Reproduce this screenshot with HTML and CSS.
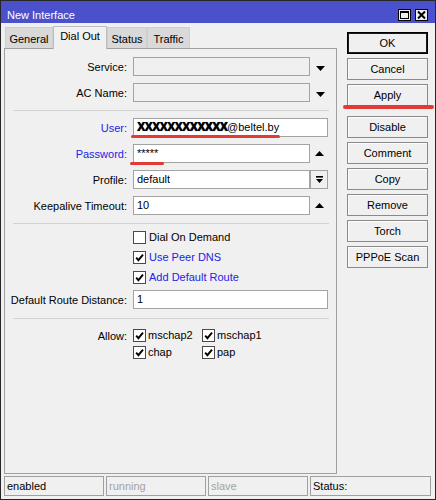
FILE: index.html
```html
<!DOCTYPE html>
<html>
<head>
<meta charset="utf-8">
<link rel="stylesheet" href="styles.css">
</head>
<body>
<div class="window">
  <div class="titlebar">
    <span class="title">New Interface</span>
    <div class="tb-buttons">
      <span class="tb-btn"><svg width="11" height="10" viewBox="0 0 11 10"><rect x="1.5" y="1.5" width="8" height="7" fill="none" stroke="#000"/><rect x="1" y="1" width="9" height="2" fill="#000"/></svg></span>
      <span class="tb-btn"><svg width="11" height="10" viewBox="0 0 11 10"><path d="M2 1.5 L9 8.5 M9 1.5 L2 8.5" stroke="#000" stroke-width="2" fill="none"/></svg></span>
    </div>
  </div>

  <div class="body">
    <div class="left">
      <div class="tabs">
        <div class="tab tab-general">General</div>
        <div class="tab tab-dialout active">Dial Out</div>
        <div class="tab tab-status">Status</div>
        <div class="tab tab-traffic">Traffic</div>
      </div>
      <div class="panel">
        <div class="row">
          <span class="lbl">Service:</span>
          <div class="ctl"><div class="input disabled"></div><span class="side down"><svg width="9" height="5" viewBox="0 0 9 5"><polygon points="0,0 9,0 4.5,5" fill="#000"/></svg></span></div>
        </div>
        <div class="row gap7">
          <span class="lbl">AC Name:</span>
          <div class="ctl"><div class="input disabled"></div><span class="side down"><svg width="9" height="5" viewBox="0 0 9 5"><polygon points="0,0 9,0 4.5,5" fill="#000"/></svg></span></div>
        </div>

        <div class="sep sep-a"></div>

        <div class="row gap7">
          <span class="lbl blue">User:</span>
          <div class="ctl"><div class="input"><span class="mask">XXXXXXXXXXXX</span>@beltel.by</div></div>
        </div>
        <div class="row gap7">
          <span class="lbl blue">Password:</span>
          <div class="ctl"><div class="input">*****</div><span class="side up"><svg width="9" height="5" viewBox="0 0 9 5"><polygon points="0,5 9,5 4.5,0" fill="#000"/></svg></span></div>
        </div>
        <div class="row gap7">
          <span class="lbl">Profile:</span>
          <div class="ctl"><div class="input">default</div><span class="side btnbox"><svg width="9" height="8" viewBox="0 0 9 8"><rect x="1" y="0" width="7" height="1.6" fill="#000"/><polygon points="1,3 8,3 4.5,7" fill="#000"/></svg></span></div>
        </div>
        <div class="row gap7">
          <span class="lbl">Keepalive Timeout:</span>
          <div class="ctl"><div class="input">10</div><span class="side up"><svg width="9" height="5" viewBox="0 0 9 5"><polygon points="0,5 9,5 4.5,0" fill="#000"/></svg></span></div>
        </div>

        <div class="sep sep-a"></div>

        <div class="check-row">
          <span></span>
          <span class="check"><span class="cb"></span><span class="cb-text">Dial On Demand</span></span>
        </div>
        <div class="check-row">
          <span></span>
          <span class="check"><span class="cb"><svg width="11" height="11" viewBox="0 0 11 11"><path d="M2.2 5.6 L4.4 8.2 L9 2.6" stroke="#000" stroke-width="1.9" fill="none"/></svg></span><span class="cb-text blue">Use Peer DNS</span></span>
        </div>
        <div class="check-row">
          <span></span>
          <span class="check"><span class="cb"><svg width="11" height="11" viewBox="0 0 11 11"><path d="M2.2 5.6 L4.4 8.2 L9 2.6" stroke="#000" stroke-width="1.9" fill="none"/></svg></span><span class="cb-text blue">Add Default Route</span></span>
        </div>

        <div class="row drd">
          <span class="lbl">Default Route Distance:</span>
          <div class="ctl"><div class="input">1</div></div>
        </div>

        <div class="sep sep-b"></div>

        <div class="allow-row first">
          <span class="lbl">Allow:</span>
          <span class="check tight"><span class="cb"><svg width="11" height="11" viewBox="0 0 11 11"><path d="M2.2 5.6 L4.4 8.2 L9 2.6" stroke="#000" stroke-width="1.9" fill="none"/></svg></span><span class="cb-text">mschap2</span></span>
          <span class="check tight"><span class="cb"><svg width="11" height="11" viewBox="0 0 11 11"><path d="M2.2 5.6 L4.4 8.2 L9 2.6" stroke="#000" stroke-width="1.9" fill="none"/></svg></span><span class="cb-text">mschap1</span></span>
        </div>
        <div class="allow-row">
          <span></span>
          <span class="check tight"><span class="cb"><svg width="11" height="11" viewBox="0 0 11 11"><path d="M2.2 5.6 L4.4 8.2 L9 2.6" stroke="#000" stroke-width="1.9" fill="none"/></svg></span><span class="cb-text">chap</span></span>
          <span class="check tight"><span class="cb"><svg width="11" height="11" viewBox="0 0 11 11"><path d="M2.2 5.6 L4.4 8.2 L9 2.6" stroke="#000" stroke-width="1.9" fill="none"/></svg></span><span class="cb-text">pap</span></span>
        </div>
      </div>
    </div>

    <div class="actions">
      <div class="btn default">OK</div>
      <div class="btn">Cancel</div>
      <div class="btn group-end">Apply</div>
      <div class="btn">Disable</div>
      <div class="btn">Comment</div>
      <div class="btn">Copy</div>
      <div class="btn">Remove</div>
      <div class="btn">Torch</div>
      <div class="btn">PPPoE Scan</div>
    </div>
  </div>

  <div class="statusbar">
    <div class="cell">enabled</div>
    <div class="cell muted">running</div>
    <div class="cell muted">slave</div>
    <div class="cell wide">Status:</div>
  </div>

  <span class="mark mark-user"></span>
  <span class="mark mark-pass"></span>
  <span class="mark mark-apply"></span>
</div>
</body>
</html>
```

FILE: styles.css
```css
html, body {
  margin: 0;
  padding: 0;
  background: #f0f0f0;
}

body {
  font-family: "Liberation Sans", Arial, sans-serif;
  font-size: 11px;
  color: #000;
}

.window {
  position: relative;
  width: 436px;
  height: 500px;
  box-sizing: border-box;
  border: 1px solid #262626;
  background: #f0f0f0;
  display: flex;
  flex-direction: column;
}

/* title bar */
.titlebar {
  height: 22px;
  flex-shrink: 0;
  background: #4b50cb;
  color: #fff;
  display: flex;
  align-items: flex-start;
}

.title {
  padding: 8px 0 0 6px;
  line-height: 13px;
}

.tb-buttons {
  margin-left: auto;
  display: flex;
  gap: 4px;
  padding: 8px 7px 0 0;
}

.tb-btn {
  width: 13px;
  height: 12px;
  box-sizing: border-box;
  border: 1px solid #000;
  background: #f0f0f0;
  display: flex;
  align-items: center;
  justify-content: center;
}

.tb-btn svg {
  display: block;
}

/* body */
.body {
  flex: 1;
  min-height: 0;
  display: flex;
  padding: 3px 0 0 3px;
}

.left {
  width: 333px;
  display: flex;
  flex-direction: column;
}

.tabs {
  display: flex;
  height: 22px;
  padding-left: 1px;
  align-items: flex-end;
  position: relative;
  z-index: 1;
}

.tab {
  box-sizing: border-box;
  height: 21px;
  border: 1px solid #cfcfcf;
  border-bottom: none;
  background: #d9d9d9;
  text-align: center;
  line-height: 13px;
  padding-top: 5px;
}

.tab.active {
  height: 23px;
  margin-bottom: -1px;
  background: #f0f0f0;
  border-color: #bdbdbd;
  padding-top: 3px;
}

.tab-general { width: 48px; }
.tab-dialout { width: 54px; }
.tab-status { width: 40px; }
.tab-traffic { width: 43px; }

.panel {
  flex: 1;
  border: 1px solid #a0a0a0;
  background: #f0f0f0;
  padding-top: 8px;
}

/* form rows */
.row {
  display: grid;
  grid-template-columns: 122px 195px;
  column-gap: 6px;
  height: 19px;
  align-items: center;
}

.gap7 { margin-top: 7px; }
.drd { margin-top: 6px; }

.lbl {
  text-align: right;
  white-space: nowrap;
}

.blue { color: #2323e6; }

.ctl {
  display: flex;
  height: 19px;
}

.input {
  flex: 1;
  height: 19px;
  box-sizing: border-box;
  border: 1px solid #a3a3a3;
  background: #fff;
  padding-left: 3px;
  line-height: 17px;
  white-space: nowrap;
  overflow: hidden;
}

.input.disabled {
  background: #f0f0f0;
}

.mask {
  font-weight: bold;
  font-size: 12px;
  letter-spacing: -0.5px;
  text-shadow: 0.6px 0 0 #000, 0 0 1px rgba(0, 0, 0, 0.6);
}

.side {
  width: 18px;
  height: 19px;
  box-sizing: border-box;
  display: flex;
  align-items: center;
}

.side svg { display: block; }

.side.down { padding-left: 6px; padding-top: 3px; }
.side.up { padding-left: 5px; }

.side.btnbox {
  border: 1px solid #a3a3a3;
  background: #f0f0f0;
  justify-content: center;
}

.sep {
  height: 0;
  border-top: 1px solid #d3d3d3;
  margin-left: 8px;
  margin-right: 7px;
}

.sep-a { margin-top: 8px; }
.sep-b { margin-top: 9px; }

/* checkboxes */
.check-row {
  display: grid;
  grid-template-columns: 122px auto;
  column-gap: 6px;
  height: 13px;
  margin-top: 7px;
  align-items: center;
}

.check {
  display: flex;
  align-items: center;
  white-space: nowrap;
}

.cb {
  width: 13px;
  height: 13px;
  box-sizing: border-box;
  border: 1px solid #4a4a4a;
  background: #fff;
  flex-shrink: 0;
}

.cb svg { display: block; }

.cb-text {
  margin-left: 3px;
  line-height: 13px;
}

.check.tight .cb-text { margin-left: 2px; }

.allow-row {
  display: grid;
  grid-template-columns: 128px 69px auto;
  height: 13px;
  margin-top: 4px;
  align-items: center;
}

.allow-row .lbl {
  padding-right: 6px;
}

.allow-row.first { margin-top: 10px; }

/* action buttons */
.actions {
  display: flex;
  flex-direction: column;
  gap: 4px;
  width: 81px;
  margin-left: 10px;
  padding-top: 6px;
}

.btn {
  height: 22px;
  box-sizing: border-box;
  border: 1px solid #8a8a8a;
  background: #f0f0f0;
  box-shadow: inset 1px 1px 0 #fbfbfb;
  text-align: center;
  line-height: 20px;
}

.btn.default {
  border-color: #000;
  box-shadow: inset 0 0 0 1px #1a1a1a;
}

.btn.group-end { margin-bottom: 6px; }

/* status bar */
.statusbar {
  display: flex;
  gap: 2px;
  height: 20px;
  margin: 2px 0 3px 0;
  padding-left: 3px;
  flex-shrink: 0;
}

.cell {
  width: 100px;
  height: 20px;
  box-sizing: border-box;
  border: 1px solid #a0a0a0;
  padding-left: 2px;
  line-height: 18px;
}

.cell.wide { width: 121px; }
.cell.muted { color: #a3a3a3; }

/* red annotation marks drawn over the screenshot */
.mark {
  position: absolute;
  background: #e23a36;
  border-radius: 2px;
}

.mark-user { left: 130px; top: 134px; width: 149px; height: 3px; }
.mark-pass { left: 129px; top: 161px; width: 34px; height: 3px; }
.mark-apply { left: 342px; top: 104px; width: 91px; height: 4px; }
```
